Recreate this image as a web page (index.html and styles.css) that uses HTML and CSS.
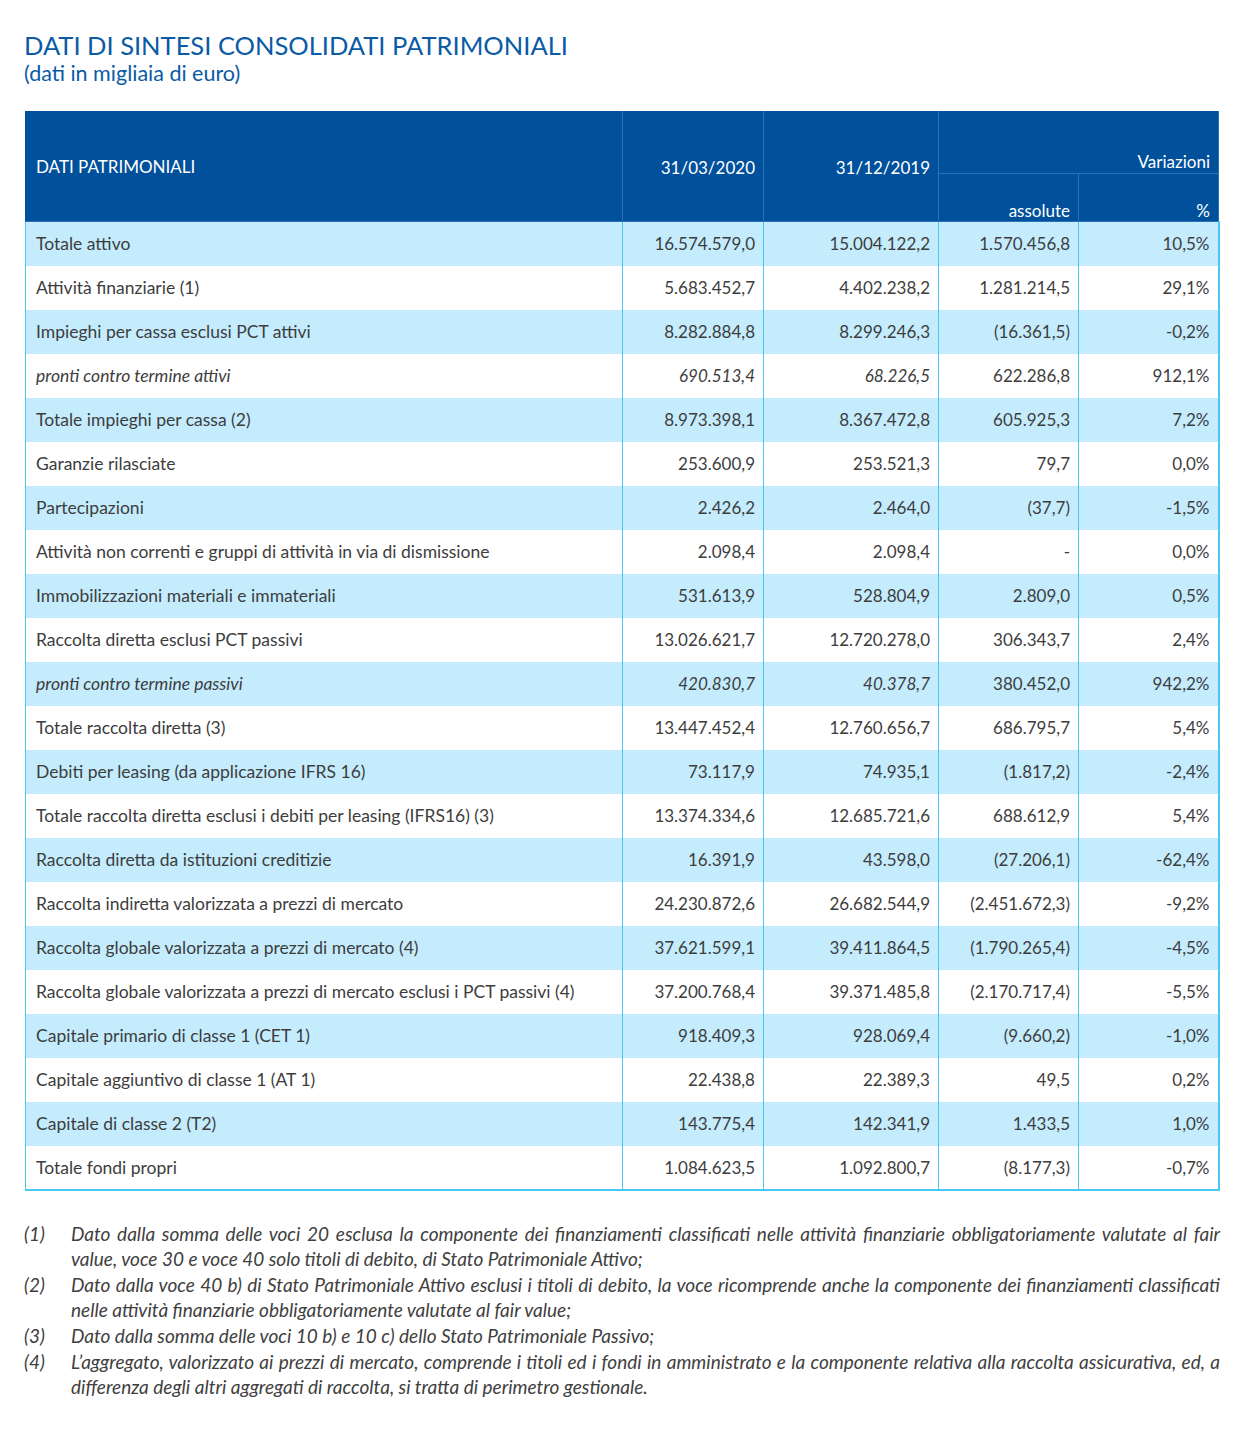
FILE: index.html
```html
<!DOCTYPE html>
<html lang="it">
<head>
<meta charset="utf-8">
<title>Dati di sintesi consolidati patrimoniali</title>
<link rel="stylesheet" href="styles.css">
</head>
<body>
<div class="page">
  <h1 class="title">DATI DI SINTESI CONSOLIDATI PATRIMONIALI</h1>
  <p class="subtitle">(dati in migliaia di euro)</p>

  <table class="data">
    <colgroup>
      <col class="c-label"><col class="c-a"><col class="c-b"><col class="c-c"><col class="c-d">
    </colgroup>
    <thead>
      <tr class="h-top">
        <th rowspan="2" class="h-label">DATI PATRIMONIALI</th>
        <th rowspan="2" class="h-num">31/03/2020</th>
        <th rowspan="2" class="h-num">31/12/2019</th>
        <th colspan="2" class="h-var">Variazioni</th>
      </tr>
      <tr class="h-sub">
        <th class="h-bottom">assolute</th>
        <th class="h-bottom">%</th>
      </tr>
    </thead>
    <tbody>
      <tr><td>Totale attivo</td><td>16.574.579,0</td><td>15.004.122,2</td><td>1.570.456,8</td><td>10,5%</td></tr>
      <tr><td>Attività finanziarie (1)</td><td>5.683.452,7</td><td>4.402.238,2</td><td>1.281.214,5</td><td>29,1%</td></tr>
      <tr><td>Impieghi per cassa esclusi PCT attivi</td><td>8.282.884,8</td><td>8.299.246,3</td><td>(16.361,5)</td><td>-0,2%</td></tr>
      <tr class="it"><td>pronti contro termine attivi</td><td>690.513,4</td><td>68.226,5</td><td>622.286,8</td><td>912,1%</td></tr>
      <tr><td>Totale impieghi per cassa (2)</td><td>8.973.398,1</td><td>8.367.472,8</td><td>605.925,3</td><td>7,2%</td></tr>
      <tr><td>Garanzie rilasciate</td><td>253.600,9</td><td>253.521,3</td><td>79,7</td><td>0,0%</td></tr>
      <tr><td>Partecipazioni</td><td>2.426,2</td><td>2.464,0</td><td>(37,7)</td><td>-1,5%</td></tr>
      <tr><td>Attività non correnti e gruppi di attività in via di dismissione</td><td>2.098,4</td><td>2.098,4</td><td>-</td><td>0,0%</td></tr>
      <tr><td>Immobilizzazioni materiali e immateriali</td><td>531.613,9</td><td>528.804,9</td><td>2.809,0</td><td>0,5%</td></tr>
      <tr><td>Raccolta diretta esclusi PCT passivi</td><td>13.026.621,7</td><td>12.720.278,0</td><td>306.343,7</td><td>2,4%</td></tr>
      <tr class="it"><td>pronti contro termine passivi</td><td>420.830,7</td><td>40.378,7</td><td>380.452,0</td><td>942,2%</td></tr>
      <tr><td>Totale raccolta diretta (3)</td><td>13.447.452,4</td><td>12.760.656,7</td><td>686.795,7</td><td>5,4%</td></tr>
      <tr><td>Debiti per leasing (da applicazione IFRS 16)</td><td>73.117,9</td><td>74.935,1</td><td>(1.817,2)</td><td>-2,4%</td></tr>
      <tr><td>Totale raccolta diretta esclusi i debiti per leasing (IFRS16) (3)</td><td>13.374.334,6</td><td>12.685.721,6</td><td>688.612,9</td><td>5,4%</td></tr>
      <tr><td>Raccolta diretta da istituzioni creditizie</td><td>16.391,9</td><td>43.598,0</td><td>(27.206,1)</td><td>-62,4%</td></tr>
      <tr><td>Raccolta indiretta valorizzata a prezzi di mercato</td><td>24.230.872,6</td><td>26.682.544,9</td><td>(2.451.672,3)</td><td>-9,2%</td></tr>
      <tr><td>Raccolta globale valorizzata a prezzi di mercato (4)</td><td>37.621.599,1</td><td>39.411.864,5</td><td>(1.790.265,4)</td><td>-4,5%</td></tr>
      <tr><td>Raccolta globale valorizzata a prezzi di mercato esclusi i PCT passivi (4)</td><td>37.200.768,4</td><td>39.371.485,8</td><td>(2.170.717,4)</td><td>-5,5%</td></tr>
      <tr><td>Capitale primario di classe 1 (CET 1)</td><td>918.409,3</td><td>928.069,4</td><td>(9.660,2)</td><td>-1,0%</td></tr>
      <tr><td>Capitale aggiuntivo di classe 1 (AT 1)</td><td>22.438,8</td><td>22.389,3</td><td>49,5</td><td>0,2%</td></tr>
      <tr><td>Capitale di classe 2 (T2)</td><td>143.775,4</td><td>142.341,9</td><td>1.433,5</td><td>1,0%</td></tr>
      <tr><td>Totale fondi propri</td><td>1.084.623,5</td><td>1.092.800,7</td><td>(8.177,3)</td><td>-0,7%</td></tr>
    </tbody>
  </table>

  <ol class="notes">
    <li><span class="n">(1)</span><span class="t">Dato dalla somma delle voci 20 esclusa la componente dei finanziamenti classificati nelle attività finanziarie obbligatoriamente valutate al fair value, voce 30 e voce 40 solo titoli di debito, di Stato Patrimoniale Attivo;</span></li>
    <li><span class="n">(2)</span><span class="t">Dato dalla voce 40 b) di Stato Patrimoniale Attivo esclusi i titoli di debito, la voce ricomprende anche la componente dei finanziamenti classificati nelle attività finanziarie obbligatoriamente valutate al fair value;</span></li>
    <li><span class="n">(3)</span><span class="t">Dato dalla somma delle voci 10 b) e 10 c) dello Stato Patrimoniale Passivo;</span></li>
    <li><span class="n">(4)</span><span class="t">L’aggregato, valorizzato ai prezzi di mercato, comprende i titoli ed i fondi in amministrato e la componente relativa alla raccolta assicurativa, ed, a differenza degli altri aggregati di raccolta, si tratta di perimetro gestionale.</span></li>
  </ol>
</div>
</body>
</html>
```

FILE: styles.css
```css
html, body {
  margin: 0;
  padding: 0;
  background: #ffffff;
}

body {
  font-family: Lato, "Liberation Sans", sans-serif;
  color: #3d3d3d;
}

.page {
  width: 1248px;
  padding: 29px 0 0 24px;
  box-sizing: border-box;
}

.title {
  margin: 0;
  font-weight: 400;
  font-size: 25.5px;
  line-height: 32px;
  color: #0a5aa5;
}

.subtitle {
  margin: 0;
  font-size: 21.5px;
  line-height: 24px;
  color: #0a5aa5;
}

.data {
  margin: 26px 0 0 1px;
  width: 1193px;
  border-collapse: collapse;
  table-layout: fixed;
  font-size: 17px;
}

.c-label { width: 597px; }
.c-a { width: 141px; }
.c-b { width: 175px; }
.c-c { width: 140px; }
.c-d { width: 140px; }

.data thead th {
  background: #00509b;
  color: #ffffff;
  font-weight: 400;
  text-align: right;
  padding: 0 8px;
  border: 1px solid #2a72b5;
  border-top-color: #00509b;
}

.data thead .h-label {
  text-align: left;
  padding-left: 10px;
  vertical-align: middle;
  border-left-color: #00509b;
}

.data thead .h-num {
  vertical-align: middle;
  padding-top: 2px;
}

.data .h-top {
  height: 62px;
}

.data .h-var {
  vertical-align: bottom;
  padding-bottom: 1px;
  border-bottom: 1px solid #2a72b5;
}

.data .h-sub {
  height: 48px;
}

.data .h-bottom {
  vertical-align: bottom;
  padding-bottom: 0;
}

.data tbody tr {
  height: 44px;
}

.data tbody tr:nth-child(odd) td {
  background: #c4ecfd;
}

.data tbody td {
  border-left: 1px solid #4cc7ef;
  border-right: 1px solid #4cc7ef;
  padding: 0 8px;
  text-align: right;
  vertical-align: middle;
  white-space: nowrap;
}

.data tbody td:first-child {
  text-align: left;
  padding-left: 10px;
  font-size: 17.5px;
  border-left: 1px solid #4cc7ef;
}

.data tbody td:last-child {
  border-right: 2px solid #4cc7ef;
}

.data tbody tr:last-child td {
  border-bottom: 2px solid #4cc7ef;
}

.data tbody tr.it td:nth-child(-n+3) {
  font-style: italic;
}

.notes {
  list-style: none;
  margin: 30px 0 0 0;
  padding: 0 28px 0 0;
  font-style: italic;
  font-size: 19px;
  line-height: 25px;
  color: #404040;
}

.notes li {
  display: flex;
  margin-bottom: 1px;
}

.notes .n {
  flex: 0 0 47px;
  font-style: italic;
}

.notes .t {
  flex: 1;
  text-align: justify;
}
```
